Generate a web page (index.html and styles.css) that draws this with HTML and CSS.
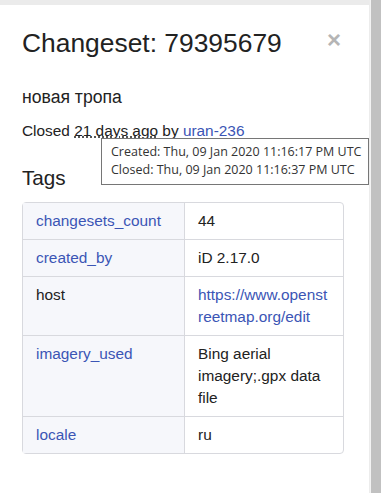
FILE: index.html
```html
<!DOCTYPE html>
<html lang="ru">
<head>
    <meta charset="UTF-8">
    <meta name="viewport" content="width=device-width, initial-scale=1.0">
    <title>Changeset: 79395679</title>
    <link rel="stylesheet" href="styles.css">
</head>
<body>

<div class="page">
    <div class="sidebar">
        <div class="topbar"></div>
        <div class="content">
            <div class="header">
                <h2>Changeset: 79395679</h2>
                <span class="close">&times;</span>
            </div>

            <p class="comment">новая тропа</p>

            <p class="meta">Closed <abbr>21 days ago</abbr> by <a href="#">uran-236</a></p>

            <h4>Tags</h4>

            <table class="tags">
                <tr>
                    <th><a href="#">changesets_count</a></th>
                    <td>44</td>
                </tr>
                <tr>
                    <th><a href="#">created_by</a></th>
                    <td>iD 2.17.0</td>
                </tr>
                <tr>
                    <th>host</th>
                    <td><a href="#">https://www.openstreetmap.org/edit</a></td>
                </tr>
                <tr>
                    <th><a href="#">imagery_used</a></th>
                    <td>Bing aerial imagery;.gpx data file</td>
                </tr>
                <tr>
                    <th><a href="#">locale</a></th>
                    <td>ru</td>
                </tr>
            </table>
        </div>
    </div>

    <div class="scrollbar"></div>

    <!-- подсказка над ссылкой "21 days ago" -->
    <div class="tooltip">
        Created: Thu, 09 Jan 2020 11:16:17 PM UTC<br>
        Closed: Thu, 09 Jan 2020 11:16:37 PM UTC
    </div>
</div>

</body>
</html>
```

FILE: styles.css
```css
body {
    margin: 0;
    font-family: "Liberation Sans", Arial, sans-serif;
    color: #222;
    background-color: white;
}

.page {
    display: flex;
    height: 493px;
    position: relative;
    overflow: hidden;
}

.sidebar {
    flex: 1;
    background-color: white;
    border-right: 1px solid #ececec;
}

.topbar {
    height: 5px;
    background-color: #ebebeb;
}

.content {
    padding: 22px 25px 0 22px;
}

.header {
    display: flex;
    justify-content: space-between;
    align-items: flex-start;
}

h2 {
    margin: 0;
    font-size: 26.4px;
    line-height: 32px;
    font-weight: normal;
}

.close {
    color: #b5b5b5;
    font-size: 24px;
    line-height: 24px;
    font-weight: bold;
    margin-top: 1px;
    margin-right: 3px;
}

.comment {
    margin: 26px 0 0 0;
    font-size: 17.6px;
    line-height: 24px;
}

.meta {
    margin: 11px 0 0 0;
    font-size: 15.4px;
    line-height: 22px;
}

abbr {
    text-decoration: underline dotted;
}

a {
    color: #3b55b5;
    text-decoration: none;
}

h4 {
    margin: 23px 0 0 0;
    font-size: 20.7px;
    line-height: 26px;
    font-weight: normal;
}

.tags {
    margin-top: 11px;
    width: 322px;
    border: 1px solid #d8d9de;
    border-radius: 4px;
    border-spacing: 0;
    font-size: 15.4px;
    line-height: 22px;
    table-layout: fixed;
}

.tags th,
.tags td {
    padding: 7px 12px 7px 13px;
    text-align: left;
    vertical-align: top;
    font-weight: normal;
    border-top: 1px solid #d8d9de;
}

.tags tr:first-child th,
.tags tr:first-child td {
    border-top: none;
}

.tags th {
    width: 136px;
    background-color: #f6f7fb;
    border-right: 1px solid #d8d9de;
}

.tags td {
    overflow-wrap: anywhere;
}

.scrollbar {
    width: 12px;
    background-color: #c1c1c1;
    border-left: 1px solid #f3f3f3;
}

.tooltip {
    position: absolute;
    left: 101px;
    top: 138px;
    width: 249px;
    padding: 4px 8px 5px 9px;
    background-color: white;
    border: 1px solid #767676;
    color: #333;
    font-family: "Open Sans", "Noto Sans", sans-serif;
    font-size: 12.5px;
    line-height: 18px;
    white-space: nowrap;
}
```
